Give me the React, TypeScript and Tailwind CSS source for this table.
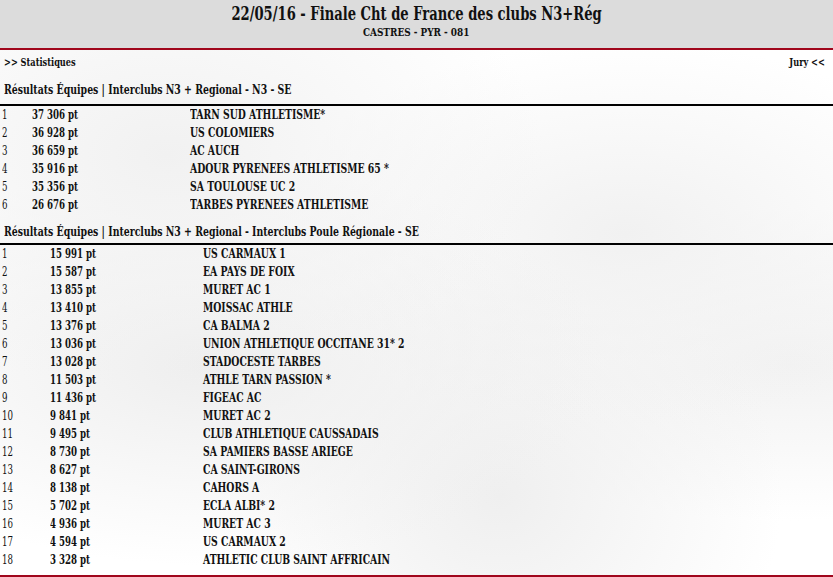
import React from "react";

const F = { fontFamily: '"DejaVu Serif Condensed", "DejaVu Serif", serif' };

const t1: [string, string, string][] = [
  ["1", "37 306 pt", "TARN SUD ATHLETISME*"],
  ["2", "36 928 pt", "US COLOMIERS"],
  ["3", "36 659 pt", "AC AUCH"],
  ["4", "35 916 pt", "ADOUR PYRENEES ATHLETISME 65 *"],
  ["5", "35 356 pt", "SA TOULOUSE UC 2"],
  ["6", "26 676 pt", "TARBES PYRENEES ATHLETISME"],
];

const t2: [string, string, string][] = [
  ["1", "15 991 pt", "US CARMAUX 1"],
  ["2", "15 587 pt", "EA PAYS DE FOIX"],
  ["3", "13 855 pt", "MURET AC 1"],
  ["4", "13 410 pt", "MOISSAC ATHLE"],
  ["5", "13 376 pt", "CA BALMA 2"],
  ["6", "13 036 pt", "UNION ATHLETIQUE OCCITANE 31* 2"],
  ["7", "13 028 pt", "STADOCESTE TARBES"],
  ["8", "11 503 pt", "ATHLE TARN PASSION *"],
  ["9", "11 436 pt", "FIGEAC AC"],
  ["10", "9 841 pt", "MURET AC 2"],
  ["11", "9 495 pt", "CLUB ATHLETIQUE CAUSSADAIS"],
  ["12", "8 730 pt", "SA PAMIERS BASSE ARIEGE"],
  ["13", "8 627 pt", "CA SAINT-GIRONS"],
  ["14", "8 138 pt", "CAHORS A"],
  ["15", "5 702 pt", "ECLA ALBI* 2"],
  ["16", "4 936 pt", "MURET AC 3"],
  ["17", "4 594 pt", "US CARMAUX 2"],
  ["18", "3 328 pt", "ATHLETIC CLUB SAINT AFFRICAIN"],
];

function Rows({ rows, pts, name }: { rows: [string, string, string][]; pts: string; name: string }) {
  return (
    <div className="flex flex-col">
      {rows.map((r) => (
        <div key={r[0]} className="flex h-[18px] items-center text-[12px] leading-[18px] text-[#111]">
          <div className={`${pts} pl-[2px]`}>
            <span className="inline-block origin-left scale-x-[0.8]">{r[0]}</span>
          </div>
          <div className={`${name} font-bold`}>
            <span className="inline-block origin-left scale-x-[0.8] whitespace-nowrap">{r[1]}</span>
          </div>
          <div className="font-bold">
            <span className="inline-block origin-left scale-x-[0.86] whitespace-nowrap">{r[2]}</span>
          </div>
        </div>
      ))}
    </div>
  );
}

export default function App() {
  return (
    <div className="flex h-[577px] w-[833px] flex-col overflow-hidden bg-white" style={F}>
      <div className="flex h-[50px] flex-col items-center border-b-2 border-[#a0061c] bg-[#dcdcdc] text-[#111]">
        <div className="mt-[3px] h-[22px] text-[18px] font-bold leading-[22px]">
          <span className="inline-block origin-center scale-x-[0.81] whitespace-nowrap">22/05/16 - Finale Cht de France des clubs N3+Rég</span>
        </div>
        <div className="h-[15px] text-[11px] font-bold leading-[15px]">
          <span className="inline-block origin-center scale-x-[0.9] whitespace-nowrap">CASTRES - PYR - 081</span>
        </div>
      </div>
      <div className="flex flex-1 flex-col bg-[radial-gradient(ellipse_at_20%_20%,#f1f1f1_0%,transparent_40%),radial-gradient(ellipse_at_25%_60%,#eeeeee_0%,transparent_45%),radial-gradient(ellipse_at_75%_35%,#f1f1f1_0%,transparent_40%),radial-gradient(ellipse_at_60%_85%,#efefef_0%,transparent_40%),radial-gradient(ellipse_at_95%_60%,#f2f2f2_0%,transparent_35%)]">
        <div className="flex h-[26px] items-center justify-between pl-[4px] pr-[8px] text-[11px] font-bold text-[#111]">
          <span className="inline-block origin-left scale-x-[0.83] whitespace-nowrap">&gt;&gt; Statistiques</span>
          <span className="inline-block origin-right scale-x-[0.83] whitespace-nowrap">Jury &lt;&lt;</span>
        </div>
        <div className="h-[30px] border-b-2 border-black pl-[4px] pt-[6px] text-[13px] font-bold leading-[16px] text-[#111]">
          <span className="inline-block origin-left scale-x-[0.8] whitespace-nowrap">Résultats Équipes | Interclubs N3 + Regional - N3 - SE</span>
        </div>
        <Rows rows={t1} pts="w-[32px]" name="w-[158px]" />
        <div className="h-[31px] border-b-2 border-black pl-[4px] pt-[10px] text-[13px] font-bold leading-[16px] text-[#111]">
          <span className="inline-block origin-left scale-x-[0.8] whitespace-nowrap">Résultats Équipes | Interclubs N3 + Regional - Interclubs Poule Régionale - SE</span>
        </div>
        <Rows rows={t2} pts="w-[50px]" name="w-[153px]" />
      </div>
      <div className="h-[2px] bg-[#a0061c]" />
    </div>
  );
}
